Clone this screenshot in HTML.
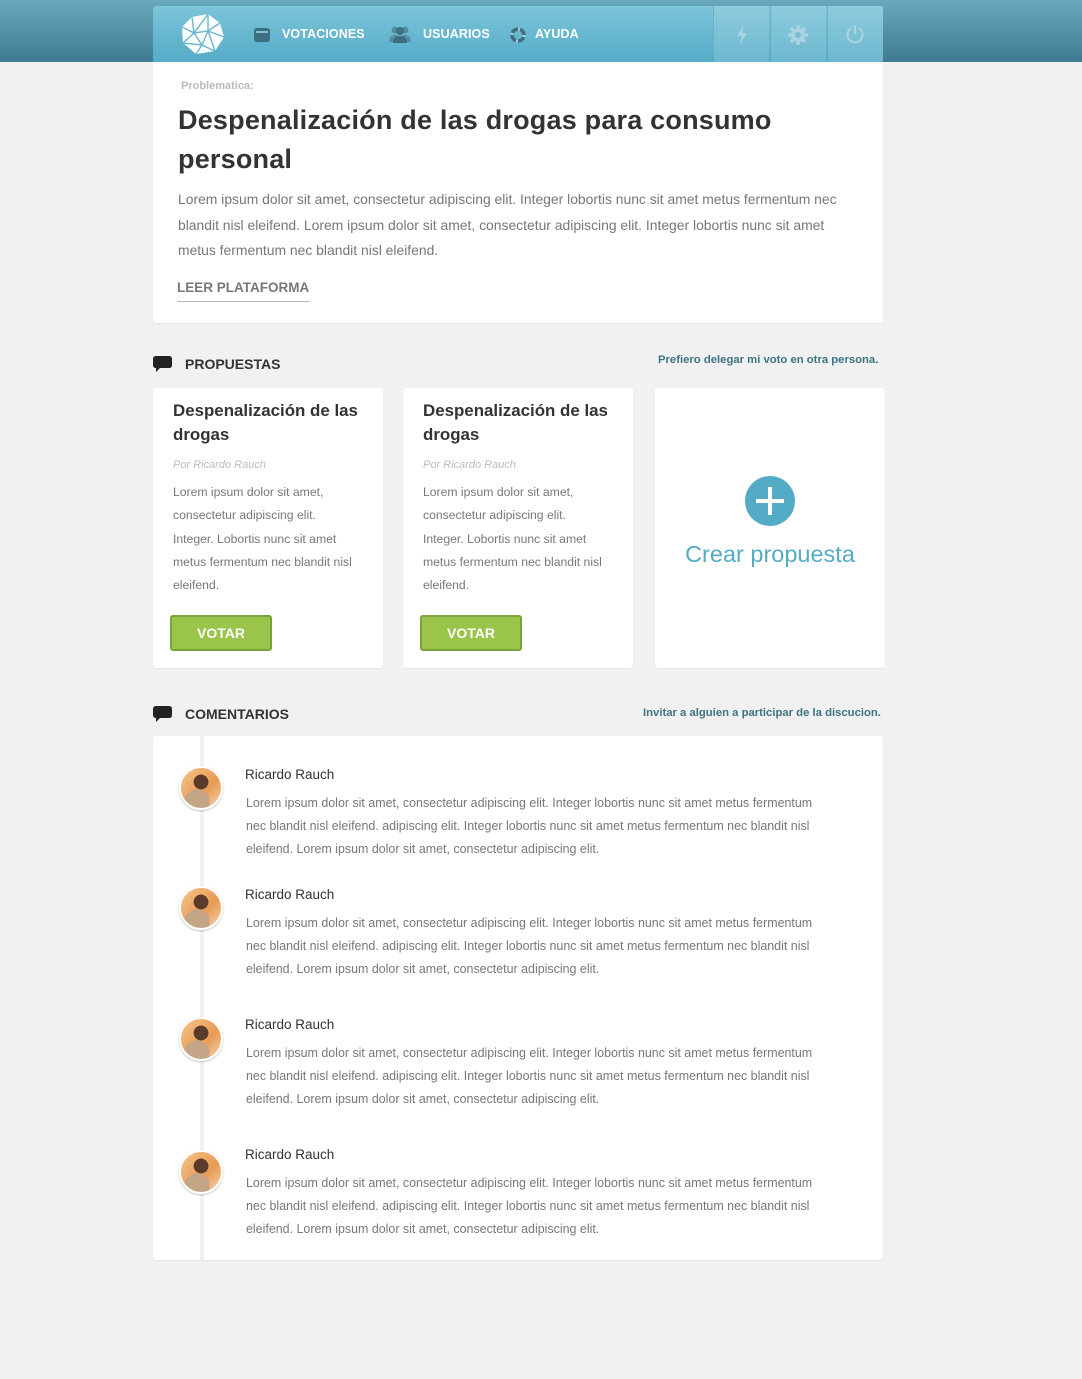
<!DOCTYPE html>
<html><head><meta charset="utf-8">
<style>
*{margin:0;padding:0;box-sizing:border-box}
body{width:1082px;height:1379px;background:#f1f1f1;font-family:"Liberation Sans",sans-serif;position:relative;overflow:hidden}
.a{position:absolute}
.hdr{left:0;top:0;width:1082px;height:62px;background:linear-gradient(#6aa9bd,#3f7b90)}
.bar{left:153px;top:6px;width:730px;height:56px;background:linear-gradient(#7cc4d9,#55acc8);border-radius:3px 3px 0 0}
.nav{top:27px;color:#fff;font-weight:bold;font-size:12.5px;letter-spacing:.1px}
.btn{top:6px;width:56px;height:56px;background:rgba(255,255,255,.14);border-left:1px solid rgba(60,140,170,.35)}
.card{background:#fff;border-radius:3px;box-shadow:0 1px 1px rgba(0,0,0,.05)}
.p{color:#777;white-space:nowrap}
.sh{font-weight:bold;font-size:14px;color:#333}
.lnk{font-weight:bold;font-size:11.3px;color:#3e7385;white-space:nowrap}
.ct{font-weight:bold;font-size:16.9px;color:#333;line-height:24px}
.by{font-style:italic;font-size:11px;color:#bbb}
.vb{width:102px;height:36px;background:#9bc44b;border:2px solid #7aa23a;border-radius:3px;color:#fff;font-weight:bold;font-size:14px;text-align:center;line-height:32px}
.av{left:179px;width:44px;height:44px;border-radius:50%;border:2px solid #fff;box-shadow:0 1px 2px rgba(0,0,0,.25);background:radial-gradient(circle at 50% 35%,#5a3a28 0 22%,transparent 23%),radial-gradient(circle at 40% 85%,#c4a588 0 30%,transparent 31%),linear-gradient(135deg,#f6c48a,#e89b55 60%,#f3d7b0)}
.nm{left:245px;font-size:13.5px;color:#333}
.cm{left:246px;font-size:12.45px;line-height:23px}
</style></head><body>
<div class="a hdr"></div>
<div class="a bar"></div>
<svg class="a" style="left:180px;top:13px" width="46" height="42" viewBox="0 0 46 42"><polygon points="12,4 28,1 40,10 44,24 35,38 16,41 3,30 2,14" fill="#fff"/><g stroke="#68b7cf" stroke-width="1.4" fill="none"><path d="M12,4 L14,20 L28,1 M14,20 L28,18 L40,10 M28,18 L28,1 M14,20 L2,14 M14,20 L3,30 M14,20 L22,32 L28,18 L44,24 M22,32 L35,38 M22,32 L16,41 M28,18 L35,38 M22,32 L3,30"/></g></svg>
<svg class="a" style="left:253px;top:27px" width="18" height="16" viewBox="0 0 18 16"><rect x="1" y="1" width="16" height="14" rx="3" fill="#3d6f80"/><rect x="3" y="4" width="12" height="2" fill="#7cc4d9"/></svg>
<div class="a nav" style="left:282px">VOTACIONES</div>
<svg class="a" style="left:388px;top:25px" width="24" height="18" viewBox="0 0 24 18"><circle cx="7" cy="5" r="3.5" fill="#4f8ea3"/><circle cx="17" cy="5" r="3.5" fill="#4f8ea3"/><circle cx="12" cy="6" r="4" fill="#3d6f80"/><path d="M1,17 Q1,10 7,10 Q13,10 13,17Z M11,17 Q11,10 17,10 Q23,10 23,17Z" fill="#4f8ea3"/><path d="M5,18 Q5,11 12,11 Q19,11 19,18Z" fill="#3d6f80"/></svg>
<div class="a nav" style="left:423px">USUARIOS</div>
<svg class="a" style="left:510px;top:27px" width="16" height="16" viewBox="0 0 16 16"><circle cx="8" cy="8" r="6" fill="none" stroke="#3d6f80" stroke-width="3.5"/><circle cx="8" cy="8" r="6" fill="none" stroke="#9fd3e3" stroke-width="3.5" stroke-dasharray="2 7.4"/></svg>
<div class="a nav" style="left:535px">AYUDA</div>
<div class="a btn" style="left:713px"></div><div class="a btn" style="left:770px"></div><div class="a btn" style="left:827px"></div>
<svg class="a" style="left:734px;top:24px" width="16" height="22" viewBox="0 0 16 22"><path d="M10,1 L3,12 L8,12 L5,21 L13,9 L8,9 Z" fill="#a9d3e0"/></svg>
<svg class="a" style="left:787px;top:24px" width="22" height="22" viewBox="0 0 22 22"><g fill="#a9d3e0"><circle cx="11" cy="11" r="7"/><g stroke="#a9d3e0" stroke-width="3.5"><path d="M11,1V21M1,11H21M4,4L18,18M18,4L4,18"/></g></g><circle cx="11" cy="11" r="3" fill="#7cbcd0"/></svg>
<svg class="a" style="left:845px;top:24px" width="20" height="20" viewBox="0 0 20 20"><path d="M6,4.5 A7.5,7.5 0 1 0 14,4.5" fill="none" stroke="#a9d3e0" stroke-width="2.2"/><path d="M10,1V10" stroke="#a9d3e0" stroke-width="2.2"/></svg>

<div class="a card" style="left:153px;top:62px;width:730px;height:261px;border-radius:0 0 3px 3px"></div>
<div class="a" style="left:181px;top:80px;font-size:11px;font-weight:bold;color:#bbb">Problematica:</div>
<div class="a" style="left:178px;top:101px;font-size:27px;font-weight:bold;color:#333;line-height:39px;letter-spacing:.2px;white-space:nowrap">Despenalización de las drogas para consumo<br>personal</div>
<div class="a p" style="left:178px;top:187px;font-size:13.9px;line-height:25.5px">Lorem ipsum dolor sit amet, consectetur adipiscing elit. Integer lobortis nunc sit amet metus fermentum nec<br>blandit nisl eleifend. Lorem ipsum dolor sit amet, consectetur adipiscing elit. Integer lobortis nunc sit amet<br>metus fermentum nec blandit nisl eleifend.</div>
<div class="a" style="left:177px;top:280px;font-size:13.5px;font-weight:bold;color:#777;border-bottom:1px solid #bbb;padding-bottom:6px;width:133px;white-space:nowrap">LEER PLATAFORMA</div>

<svg class="a" style="left:153px;top:356px" width="19" height="17" viewBox="0 0 19 17"><path d="M3,0H16Q19,0 19,3V9Q19,12 16,12H7L3,16V12Q0,12 0,9V3Q0,0 3,0Z" fill="#222"/></svg>
<div class="a sh" style="left:185px;top:356px">PROPUESTAS</div>
<div class="a lnk" style="left:658px;top:354px">Prefiero delegar mi voto en otra persona.</div>

<div class="a card" style="left:153px;top:388px;width:230px;height:280px"></div>
<div class="a ct" style="left:173px;top:399px">Despenalización de las<br>drogas</div>
<div class="a by" style="left:173px;top:459px">Por Ricardo Rauch</div>
<div class="a p" style="left:173px;top:481px;font-size:12.2px;line-height:23.3px">Lorem ipsum dolor sit amet,<br>consectetur adipiscing elit.<br>Integer. Lobortis nunc sit amet<br>metus fermentum nec blandit nisl<br>eleifend.</div>
<div class="a vb" style="left:170px;top:615px">VOTAR</div>

<div class="a card" style="left:403px;top:388px;width:230px;height:280px"></div>
<div class="a ct" style="left:423px;top:399px">Despenalización de las<br>drogas</div>
<div class="a by" style="left:423px;top:459px">Por Ricardo Rauch</div>
<div class="a p" style="left:423px;top:481px;font-size:12.2px;line-height:23.3px">Lorem ipsum dolor sit amet,<br>consectetur adipiscing elit.<br>Integer. Lobortis nunc sit amet<br>metus fermentum nec blandit nisl<br>eleifend.</div>
<div class="a vb" style="left:420px;top:615px">VOTAR</div>

<div class="a card" style="left:655px;top:388px;width:230px;height:280px"></div>
<div class="a" style="left:745px;top:476px;width:50px;height:50px;border-radius:50%;background:#54abc6"></div>
<div class="a" style="left:756px;top:499px;width:28px;height:4px;background:#fff"></div>
<div class="a" style="left:768px;top:487px;width:4px;height:28px;background:#fff"></div>
<div class="a" style="left:655px;top:541px;width:230px;text-align:center;font-size:23.5px;color:#54abc6">Crear propuesta</div>

<svg class="a" style="left:153px;top:706px" width="19" height="17" viewBox="0 0 19 17"><path d="M3,0H16Q19,0 19,3V9Q19,12 16,12H7L3,16V12Q0,12 0,9V3Q0,0 3,0Z" fill="#222"/></svg>
<div class="a sh" style="left:185px;top:706px">COMENTARIOS</div>
<div class="a lnk" style="left:643px;top:707px">Invitar a alguien a participar de la discucion.</div>

<div class="a card" style="left:153px;top:736px;width:730px;height:524px"></div>
<div class="a" style="left:200px;top:736px;width:4px;height:524px;background:#f1f1f1"></div>

<div class="a av" style="top:766px"></div>
<div class="a nm" style="top:767px">Ricardo Rauch</div>
<div class="a p cm" style="top:792px">Lorem ipsum dolor sit amet, consectetur adipiscing elit. Integer lobortis nunc sit amet metus fermentum<br>nec blandit nisl eleifend. adipiscing elit. Integer lobortis nunc sit amet metus fermentum nec blandit nisl<br>eleifend. Lorem ipsum dolor sit amet, consectetur adipiscing elit.</div>

<div class="a av" style="top:886px"></div>
<div class="a nm" style="top:887px">Ricardo Rauch</div>
<div class="a p cm" style="top:912px">Lorem ipsum dolor sit amet, consectetur adipiscing elit. Integer lobortis nunc sit amet metus fermentum<br>nec blandit nisl eleifend. adipiscing elit. Integer lobortis nunc sit amet metus fermentum nec blandit nisl<br>eleifend. Lorem ipsum dolor sit amet, consectetur adipiscing elit.</div>

<div class="a av" style="top:1017px"></div>
<div class="a nm" style="top:1017px">Ricardo Rauch</div>
<div class="a p cm" style="top:1042px">Lorem ipsum dolor sit amet, consectetur adipiscing elit. Integer lobortis nunc sit amet metus fermentum<br>nec blandit nisl eleifend. adipiscing elit. Integer lobortis nunc sit amet metus fermentum nec blandit nisl<br>eleifend. Lorem ipsum dolor sit amet, consectetur adipiscing elit.</div>

<div class="a av" style="top:1150px"></div>
<div class="a nm" style="top:1147px">Ricardo Rauch</div>
<div class="a p cm" style="top:1172px">Lorem ipsum dolor sit amet, consectetur adipiscing elit. Integer lobortis nunc sit amet metus fermentum<br>nec blandit nisl eleifend. adipiscing elit. Integer lobortis nunc sit amet metus fermentum nec blandit nisl<br>eleifend. Lorem ipsum dolor sit amet, consectetur adipiscing elit.</div>
</body></html>
